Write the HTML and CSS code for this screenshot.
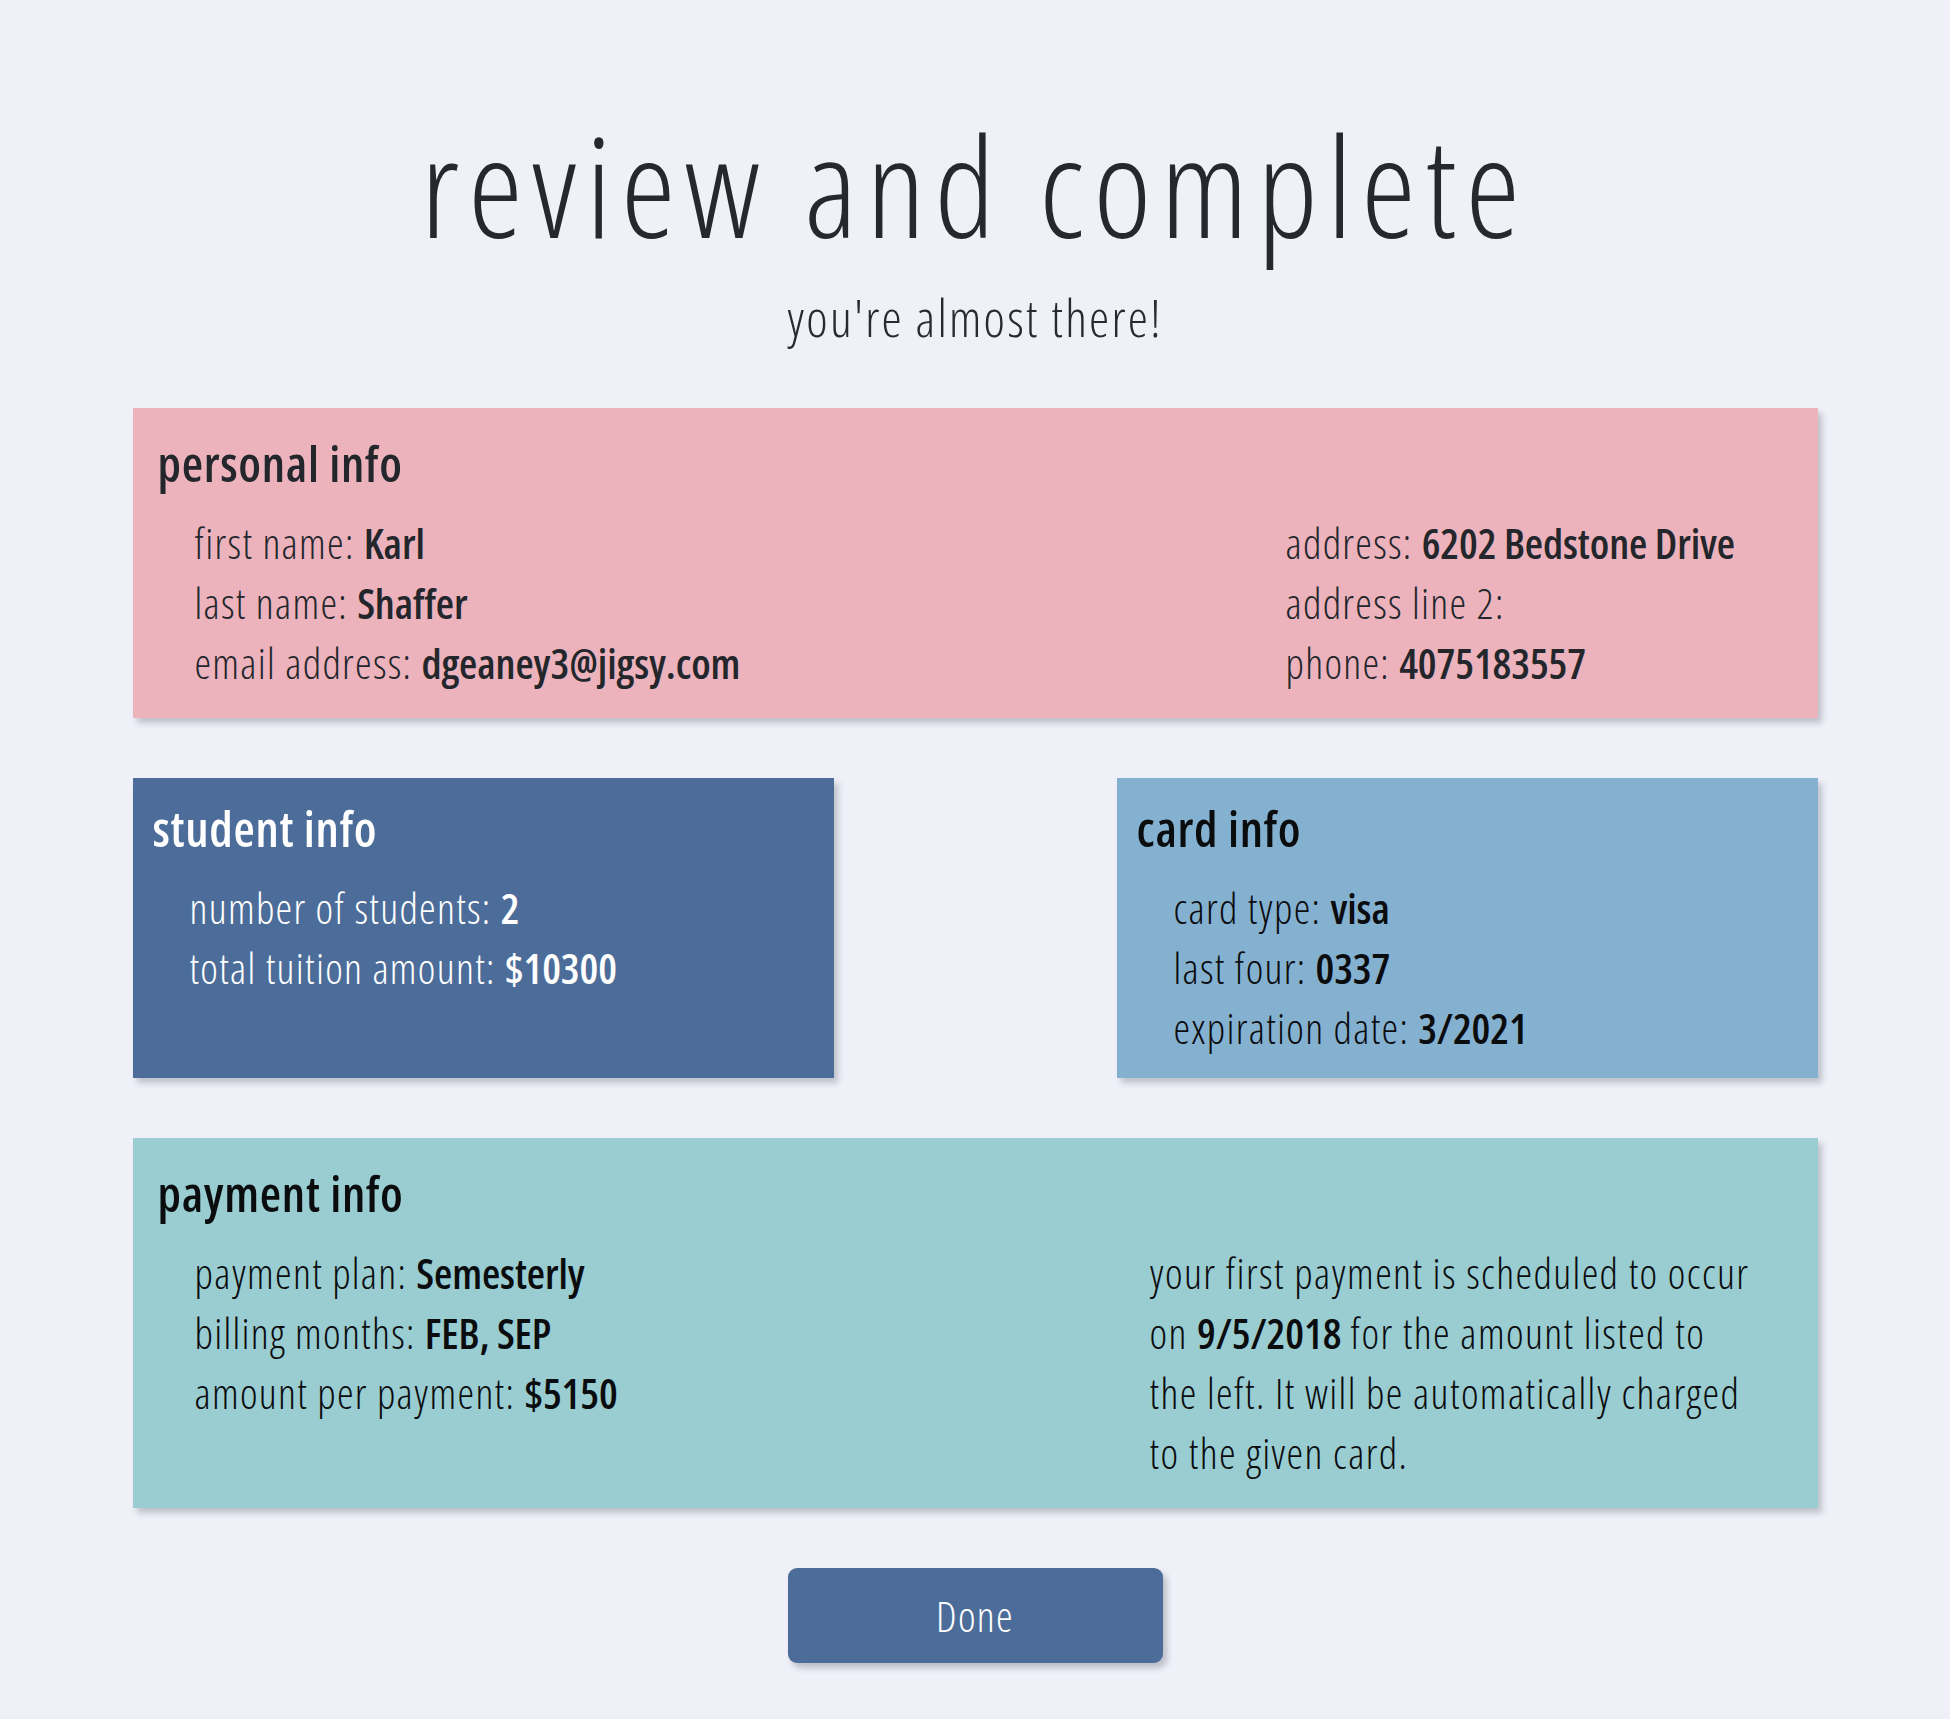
FILE: index.html
```html
<!DOCTYPE html>
<html lang="en">
<head>
<meta charset="utf-8">
<title>review and complete</title>
<link rel="stylesheet" href="styles.css">
</head>
<body>
<main class="page">
  <header class="intro">
    <h1 class="title">review and complete</h1>
    <p class="subtitle">you're almost there!</p>
  </header>

  <section class="box box-personal">
    <h2 class="box-title">personal info</h2>
    <div class="box-body">
      <ul class="fields">
        <li>first name: <b>Karl</b></li>
        <li>last name: <b>Shaffer</b></li>
        <li>email address: <b>dgeaney3@jigsy.com</b></li>
      </ul>
      <ul class="fields fields-right">
        <li>address: <b>6202 Bedstone Drive</b></li>
        <li>address line 2: <b></b></li>
        <li>phone: <b>4075183557</b></li>
      </ul>
    </div>
  </section>

  <div class="pair">
    <section class="box box-small box-student">
      <h2 class="box-title">student info</h2>
      <ul class="fields">
        <li>number of students: <b>2</b></li>
        <li>total tuition amount: <b>$10300</b></li>
      </ul>
    </section>
    <section class="box box-small box-card">
      <h2 class="box-title">card info</h2>
      <ul class="fields">
        <li>card type: <b>visa</b></li>
        <li>last four: <b>0337</b></li>
        <li>expiration date: <b>3/2021</b></li>
      </ul>
    </section>
  </div>

  <section class="box box-payment">
    <h2 class="box-title">payment info</h2>
    <div class="box-body">
      <ul class="fields">
        <li>payment plan: <b>Semesterly</b></li>
        <li>billing months: <b>FEB, SEP</b></li>
        <li>amount per payment: <b>$5150</b></li>
      </ul>
      <div class="note-col">
        <p class="note">your first payment is scheduled to occur<br>on <b>9/5/2018</b> for the amount listed to<br>the left. It will be automatically charged<br>to the given card.</p>
      </div>
    </div>
  </section>

  <div class="actions">
    <button class="done" type="button">Done</button>
  </div>
</main>
</body>
</html>
```

FILE: styles.css
```css
html, body {
  margin: 0;
  padding: 0;
}

body {
  background: #eff0f8;
  color: #23262b;
  font-family: "Open Sans", "DejaVu Sans Condensed", "Liberation Sans Narrow", sans-serif;
  font-stretch: 75%;
  font-weight: 300;
}

.page {
  width: 1685px;
  margin: 0 auto;
  padding: 115px 0 56px;
}

.intro {
  text-align: center;
}

.title {
  margin: 0;
  font-size: 138px;
  line-height: 138px;
  font-weight: 300;
  letter-spacing: 9.2px;
  color: #25282e;
}

.subtitle {
  margin: 39px 0 0;
  font-size: 51px;
  line-height: 51px;
  font-weight: 300;
  letter-spacing: 2.2px;
  color: #272a30;
}

.box {
  margin-top: 60px;
  padding: 25px;
  box-shadow: 4px 5px 6px rgba(40, 45, 60, 0.24);
}

.box-personal {
  margin-top: 65px;
  background: #ecb3bd;
}

.box-title {
  margin: 0;
  font-size: 49px;
  line-height: 60px;
  font-weight: 600;
  letter-spacing: 0.7px;
}

.box-body {
  display: flex;
  align-items: flex-start;
  margin-top: 20px;
}

.fields {
  list-style: none;
  margin: 0;
  padding: 0 0 0 37px;
  flex: 1;
  font-size: 42px;
  line-height: 60px;
  letter-spacing: 1.3px;
}

.box-small .fields {
  margin-top: 20px;
}

.fields li {
  white-space: nowrap;
}

.fields b,
.note b {
  font-weight: 600;
  letter-spacing: -0.1px;
}

.fields-right {
  flex: 0 0 507px;
  padding-left: 0;
}

.pair {
  display: flex;
  justify-content: space-between;
  margin-top: 60px;
}

.pair .box {
  margin-top: 0;
}

.box-small {
  width: 701px;
  box-sizing: border-box;
  padding: 20px;
}

.box-student {
  background: #4c6d99;
  color: #ffffff;
}

.box-card {
  background: #85b1d1;
  color: #0b0c0e;
}

.box-payment {
  background: #99cdd2;
  color: #0b0c0e;
}

.note-col {
  flex: 0 0 643px;
}

.note {
  margin: 0;
  font-size: 42px;
  line-height: 60px;
  letter-spacing: 1.4px;
  white-space: nowrap;
}

.actions {
  display: flex;
  justify-content: center;
  margin-top: 60px;
}

.done {
  width: 375px;
  height: 95px;
  border: 0;
  border-radius: 9px;
  background: #4c6d99;
  color: #ffffff;
  font-family: inherit;
  font-stretch: 75%;
  font-size: 42px;
  font-weight: 300;
  letter-spacing: 1.3px;
  box-shadow: 4px 5px 6px rgba(40, 45, 60, 0.25);
  cursor: pointer;
}
```
